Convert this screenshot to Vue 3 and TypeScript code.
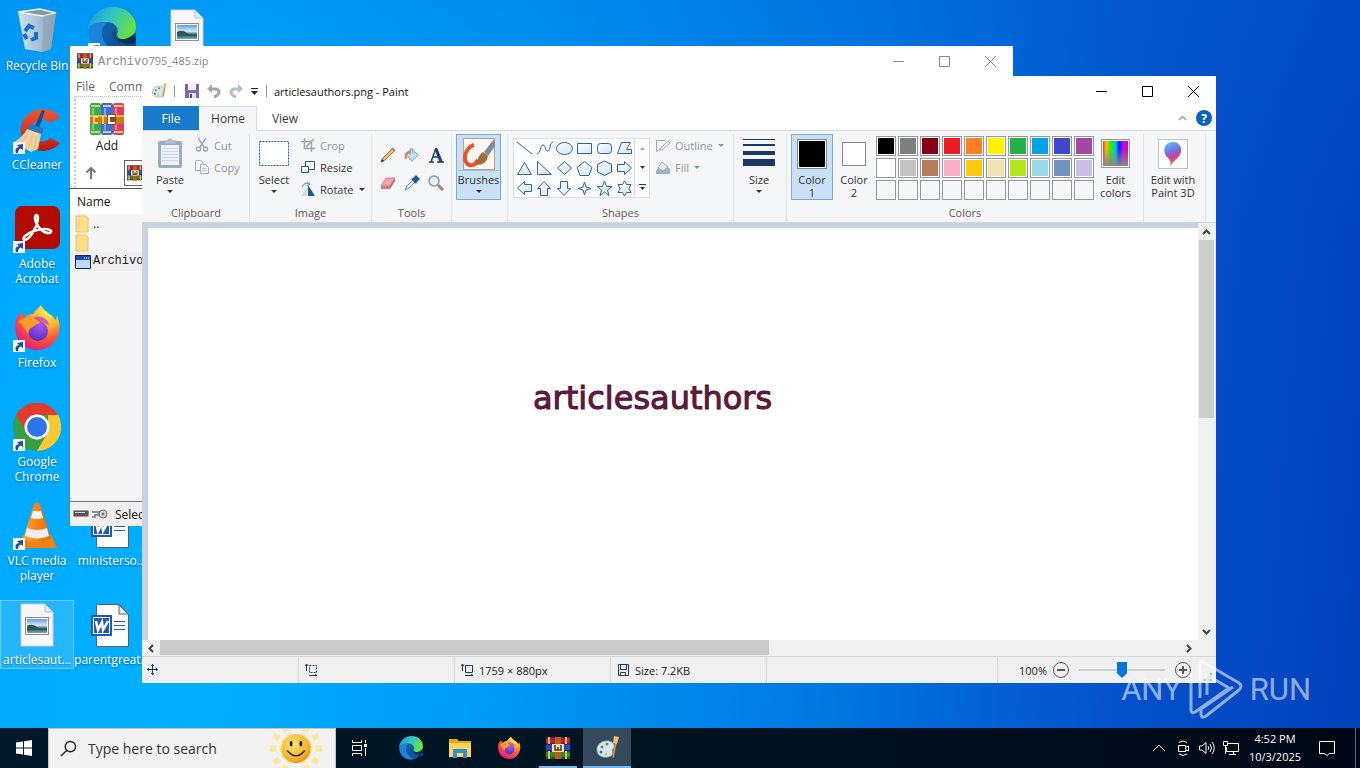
<script setup lang="ts">
import { ref } from 'vue'

interface DesktopItem {
  label: string
  icon: string
  col: number
  row: number
  shortcut?: boolean
  selected?: boolean
}

const desktopItems: DesktopItem[] = [
  { label: 'Recycle Bin', icon: 'bin', col: 1, row: 1 },
  { label: 'CCleaner', icon: 'ccleaner', col: 1, row: 2, shortcut: true },
  { label: 'Adobe Acrobat', icon: 'acrobat', col: 1, row: 3, shortcut: true },
  { label: 'Firefox', icon: 'firefox', col: 1, row: 4, shortcut: true },
  { label: 'Google Chrome', icon: 'chrome', col: 1, row: 5, shortcut: true },
  { label: 'VLC media player', icon: 'vlc', col: 1, row: 6, shortcut: true },
  { label: 'articlesaut...', icon: 'picture', col: 1, row: 7, selected: true },
  { label: '', icon: 'edge', col: 2, row: 1, shortcut: true },
  { label: 'ministerso...', icon: 'word', col: 2, row: 6 },
  { label: 'parentgreat...', icon: 'word', col: 2, row: 7 },
  { label: '', icon: 'picture', col: 3, row: 1 },
]

const shapes: { name: string; d: string }[] = [
  { name: 'Line', d: 'M1 2L16 14' },
  { name: 'Curve', d: 'M1 14C5 13 4 5 7 5S9 12 12 11 13 3 17 2' },
  { name: 'Oval', d: 'M.5 8.500A8 6 0 1 1 16.500 8.500A8 6 0 1 1 .5 8.500Z' },
  { name: 'Rectangle', d: 'M1.500 3.500H15.500V13.500H1.500Z' },
  { name: 'Rounded rectangle', d: 'M4.500 3.500H12.500Q15.500 3.500 15.500 6.500V10.500Q15.500 13.500 12.500 13.500H4.500Q1.500 13.500 1.500 10.500V6.500Q1.500 3.500 4.500 3.500Z' },
  { name: 'Polygon', d: 'M5.500 2.500H14.500L10.500 9.500H15.500V13.500H1.500Z' },
  { name: 'Triangle', d: 'M8.500 2.500L15.500 14.500H1.500Z' },
  { name: 'Right triangle', d: 'M1.500 1.500V14.500H15.500Z' },
  { name: 'Diamond', d: 'M8.500 1.500L15.500 8L8.500 14.500L1.500 8Z' },
  { name: 'Pentagon', d: 'M8.500 1.500L16 7.500L13 15.500H4L1 7.500Z' },
  { name: 'Hexagon', d: 'M8.500 1L15.500 4.500V12L8.500 15.500L1.500 12V4.500Z' },
  { name: 'Right arrow', d: 'M1.500 4.500H8.500V1.500L15.500 8L8.500 14.500V11.500H1.500Z' },
  { name: 'Left arrow', d: 'M15.500 4.500H8.500V1.500L1.500 8L8.500 14.500V11.500H15.500Z' },
  { name: 'Up arrow', d: 'M4.500 15.500V8.500H1.500L8 1.500L14.500 8.500H11.500V15.500Z' },
  { name: 'Down arrow', d: 'M4.500 1.500V8.500H1.500L8 15.500L14.500 8.500H11.500V1.500Z' },
  { name: 'Four-point star', d: 'M8.500 2L10 7L15 8.500L10 10L8.500 15L7 10L2 8.500L7 7Z' },
  { name: 'Five-point star', d: 'M8.500 1L10.500 6.500H16L11.500 10L13 15.500L8.500 12L4 15.500L5.500 10L1 6.500H6.500Z' },
  { name: 'Six-point star', d: 'M8.500 1L10.500 4.500H15L13 8.500L15 12.500H10.500L8.500 16L6.500 12.500H2L4 8.500L2 4.500H6.500Z' },
]

const palette: string[] = [
  '#000000', '#7f7f7f', '#880015', '#ed1c24', '#ff7f27', '#fff200', '#22b14c', '#00a2e8', '#3f48cc', '#a349a4',
  '#ffffff', '#c3c3c3', '#b97a57', '#ffaec9', '#ffc90e', '#efe4b0', '#b5e61d', '#99d9ea', '#7092be', '#c8bfe7',
  '', '', '', '', '', '', '', '', '', '',
]

const tools: { name: string; icon: string }[] = [
  { name: 'Pencil', icon: 'pencil' },
  { name: 'Fill with color', icon: 'bucket' },
  { name: 'Text', icon: 'letter' },
  { name: 'Eraser', icon: 'eraser' },
  { name: 'Color picker', icon: 'picker' },
  { name: 'Magnifier', icon: 'magnifier' },
]

const taskApps: { name: string; icon: string; state: string }[] = [
  { name: 'Microsoft Edge', icon: 'edge', state: '' },
  { name: 'File Explorer', icon: 'explorer', state: '' },
  { name: 'Firefox', icon: 'firefox', state: '' },
  { name: 'WinRAR', icon: 'rar', state: 'open' },
  { name: 'Paint', icon: 'paint', state: 'active' },
]

const zoom = ref(50)
const query = ref('')
const primary = ref('#000000')
</script>

<template>
  <div class="screen">
    <svg class="sprite" aria-hidden="true">
      <defs>
        <linearGradient id="gBin" x1="0" x2="1"><stop offset="0" stop-color="#dfe9ef" /><stop offset=".5" stop-color="#b9c9d4" /><stop offset="1" stop-color="#8da2b2" /></linearGradient>
        <linearGradient id="gCc" x1="0" y1="0" x2="0" y2="1"><stop offset="0" stop-color="#f0563a" /><stop offset="1" stop-color="#b81c12" /></linearGradient>
        <radialGradient id="gFox" cx=".72" cy=".15" r=".95"><stop offset="0" stop-color="#fff44f" /><stop offset=".35" stop-color="#ffb02e" /><stop offset=".6" stop-color="#ff5b32" /><stop offset="1" stop-color="#e31587" /></radialGradient>
        <radialGradient id="gFoxIn" cx=".6" cy=".2" r=".9"><stop offset="0" stop-color="#a855f7" /><stop offset="1" stop-color="#4b2fb3" /></radialGradient>
        <linearGradient id="gEdgeA" x1="0" y1="0" x2="1" y2=".4"><stop offset="0" stop-color="#1d8fd8" /><stop offset=".5" stop-color="#2fc3c8" /><stop offset="1" stop-color="#66e04a" /></linearGradient>
        <linearGradient id="gEdgeB" x1="0" y1="0" x2="1" y2="1"><stop offset="0" stop-color="#0f6fc4" /><stop offset="1" stop-color="#0c4a8c" /></linearGradient>
        <linearGradient id="gVlc" x1="0" x2="1"><stop offset="0" stop-color="#ffa02e" /><stop offset="1" stop-color="#e86a00" /></linearGradient>
        <linearGradient id="gSky" x1="0" y1="0" x2="0" y2="1"><stop offset="0" stop-color="#5b9ee0" /><stop offset=".45" stop-color="#d6e8f5" /><stop offset=".7" stop-color="#27505c" /><stop offset="1" stop-color="#7daec8" /></linearGradient>
        <linearGradient id="gRainbow" x1="0" x2="1"><stop offset="0" stop-color="#f33" /><stop offset=".12" stop-color="#fb0" /><stop offset=".3" stop-color="#3e0" /><stop offset=".5" stop-color="#0cc" /><stop offset=".65" stop-color="#02f" /><stop offset=".82" stop-color="#c0f" /><stop offset="1" stop-color="#f04" /></linearGradient>
        <linearGradient id="gGrey" x1="0" y1="0" x2="0" y2="1"><stop offset=".3" stop-color="#888" stop-opacity="0" /><stop offset="1" stop-color="#888" /></linearGradient>
        <linearGradient id="gPin" x1=".3" y1="0" x2=".6" y2="1"><stop offset="0" stop-color="#45c8f5" /><stop offset=".4" stop-color="#7d6be0" /><stop offset=".65" stop-color="#d8408c" /><stop offset="1" stop-color="#ff9a3c" /></linearGradient>
        <linearGradient id="gShape" x1="0" y1="0" x2="1" y2="1"><stop offset="0" stop-color="#fff" /><stop offset="1" stop-color="#d4e4f5" /></linearGradient>
        <radialGradient id="gSun" cx=".4" cy=".35" r=".7"><stop offset="0" stop-color="#ffe27a" /><stop offset=".7" stop-color="#f8b62c" /><stop offset="1" stop-color="#e08d18" /></radialGradient>
      </defs>

      <symbol id="i-bin" viewBox="0 0 48 48">
        <path d="M5 5L27 2L43 6L38 42L29 45L12 42Z" fill="url(#gBin)" opacity=".92" />
        <path d="M5 5L27 2L43 6L30 9Z" fill="#8497a5" stroke="#eef4f8" stroke-width="1.500" />
        <path d="M30 9L43 6L38 42L29 45Z" fill="#8fa3b3" opacity=".6" />
        <g fill="none" stroke="#1c6fc4" stroke-width="4"><path d="M12 24L16 19L21 21" /><path d="M23 25L23 31L18 33" /><path d="M14 32L11 27" /></g>
      </symbol>
      <symbol id="i-ccleaner" viewBox="0 0 48 48">
        <path d="M47 11A22 21 0 1 0 47 37L37 32A11 11 0 1 1 37 17Z" fill="url(#gCc)" />
        <path d="M29 4L32 5L26 22L22 20Z" fill="#1b4f86" />
        <path d="M17 18L30 22L29 28L14 24Z" fill="#2f77bb" />
        <path d="M14 23L28 28L25 43L18 46L1 36Q9 32 14 23Z" fill="#f0d2a0" />
        <path d="M15 28L7 38M20 29L15 42M24 30L21 43" stroke="#e0bd88" fill="none" />
      </symbol>
      <symbol id="i-acrobat" viewBox="0 0 48 48">
        <rect x="2" y="1" width="45" height="43" rx="7" fill="#b30b00" />
        <path d="M12 35C17 34 24 23 25 13C25 9 22 9 22 13C23 22 31 29 37 28C40 26 37 24 32 24C25 24 17 27 12 31C10 33 10 35 12 35Z" fill="none" stroke="#fff" stroke-width="2.500" />
      </symbol>
      <symbol id="i-firefox" viewBox="0 0 48 48">
        <path d="M3 15L8 8L11 14C13 11 16 10 20 10C22 6 26 4 28 1C30 6 34 8 38 11C41 13 42 16 43 16L44 11C51 27 43 46 24 46C9 46-1 33 3 15Z" fill="url(#gFox)" />
        <circle cx="25" cy="27" r="10" fill="url(#gFoxIn)" />
        <path d="M5 18C10 13 16 13 20 17L27 17C28 20 22 20 20 23C14 25 16 30 16 30C11 26 11 21 5 18Z" fill="#ff9a2b" />
        <path d="M20 14C27 10 36 15 36 22C33 18 28 19 25 17Z" fill="#c836c8" opacity=".75" />
      </symbol>
      <symbol id="i-chrome" viewBox="0 0 48 48">
        <circle cx="24" cy="24" r="24" fill="#34a046" />
        <path d="M3 12A24 24 0 0 1 45 12H24L14 30Z" fill="#e23b2e" />
        <path d="M45 12A24 24 0 0 1 24 48L35 29V12Z" fill="#fcc934" />
        <circle cx="24" cy="24" r="12.500" fill="#fff" /><circle cx="24" cy="24" r="10" fill="#2f75ea" />
      </symbol>
      <symbol id="i-vlc" viewBox="0 0 48 48">
        <path d="M10 33H38L44 46H3Z" fill="#f18210" />
        <path d="M21 2Q24-1 27 2L38 37Q24 44 10 37Z" fill="url(#gVlc)" />
        <path d="M20 9L28 9L30 16Q24 18 18 16Z" fill="#f2f2f2" /><path d="M14 26Q24 30 34 26L36 34Q24 39 12 34Z" fill="#eee" />
      </symbol>
      <symbol id="i-picture" viewBox="0 0 48 48">
        <path d="M8 3H32L40 11V45H8Z" fill="#f7f7f7" stroke="#c9cdd0" /><path d="M32 3V11H40Z" fill="#dfe9f0" stroke="#b5c3cc" />
        <rect x="12.500" y="16.500" width="23" height="17" fill="#fff" stroke="#8d8d8d" /><rect x="14" y="18" width="20" height="14" fill="url(#gSky)" />
        <path d="M14 25Q19 22 24 26T34 28V29H14Z" fill="#2b5a55" />
      </symbol>
      <symbol id="i-word" viewBox="0 0 48 48">
        <path d="M8.500 3.500H31.500L40.500 13.500V45.500H8.500Z" fill="#fff" stroke="#55616b" /><path d="M31 4V13H40Z" fill="#e8e8e8" stroke="#55616b" />
        <path d="M26 20.500H37M26 24.500H37M26 28.500H37" stroke="#2b5fb3" />
        <rect x="3" y="14" width="21" height="21" fill="#1f5bb5" /><rect x="5" y="16" width="17" height="17" fill="#fff" /><rect x="6" y="17" width="15" height="15" fill="#1f5bb5" />
        <path d="M8 20L10 29L14 21L15 29L20 20" fill="none" stroke="#fff" stroke-width="2.500" />
      </symbol>
      <symbol id="i-edge" viewBox="0 0 48 48">
        <circle cx="24" cy="24" r="23" fill="url(#gEdgeB)" />
        <path d="M0 22C2 8 13 0 25 0C39 0 48 10 48 20C48 28 42 32 35 32C30 32 27 30 29 27C32 22 27 15 19 15C10 15 4 18 0 22Z" fill="url(#gEdgeA)" />
        <path d="M1 20C4 16 10 15 19 15C13 20 11 30 20 40C24 44 28 46 30 46C14 50-2 38 1 20Z" fill="#1b84d8" />
        <path d="M29 27C26 32 32 36 40 34L48 29V40L38 39C28 38 22 31 25 23Z" fill="#0c4a8c" />
        <path d="M30 28C28 31 33 33 38 32L48 26V34L44 37Q34 37 30 33Q27 30 30 28Z" fill="#001a29" opacity=".6" />
      </symbol>
      <symbol id="i-explorer" viewBox="0 0 24 24">
        <path d="M1 3H9L11 5H23V21H1Z" fill="#e8a90c" /><path d="M1 7H23V21H1Z" fill="#ffd45a" />
        <path d="M5 13H19V22H15V17H9V22H5Z" fill="#2f8fd8" />
      </symbol>
      <symbol id="i-rar" viewBox="0 0 24 24">
        <rect x="0" y="1" width="24" height="7" fill="#a8244c" /><rect x="0" y="8" width="24" height="7" fill="#2849c0" /><rect x="0" y="15" width="24" height="8" fill="#2c8a3c" />
        <path d="M0 1H24M0 8H24M0 15H24M0 22H24" stroke="#182018" stroke-width="1" />
        <path d="M3 1V8M20 1V8M3 15V23M20 15V23" stroke="#e8b93a" stroke-width="2" />
        <rect x="9" y="1" width="6" height="22" fill="#c35a18" /><rect x="6" y="8" width="12" height="8" fill="#f0dcb8" /><path d="M9 9V14H15V9M12 11V14" fill="none" stroke="#5a3210" stroke-width="1.500" />
      </symbol>
      <symbol id="i-raradd" viewBox="0 0 34 34">
        <rect x="0" y="1" width="11" height="32" rx="2" fill="#35b04c" /><rect x="11" y="1" width="12" height="32" rx="2" fill="#3570e0" /><rect x="23" y="1" width="11" height="32" rx="2" fill="#e03c62" />
        <path d="M1 4H10M13 4H21M24 4H33M1 30H10M13 30H21M24 30H33" stroke="#e8c860" stroke-width="2" />
        <path d="M3 6V28M15 6V28M26 6V28" stroke="#fff" opacity=".35" stroke-width="2" />
        <rect x="0" y="13" width="34" height="9" fill="#c87a18" /><path d="M0 14H34" stroke="#f7b93c" stroke-width="2" />
        <path d="M8 15H4V21H8M13 14V22" fill="none" stroke="#ffe48a" stroke-width="1.500" /><rect x="17" y="12" width="9" height="11" fill="#8a4d10" /><path d="M25 14H19V21H25" fill="none" stroke="#fff" stroke-width="2" />
      </symbol>
      <symbol id="i-paint" viewBox="0 0 24 24">
        <path d="M2 15C1 8 8 4 14 5C20 6 20 11 18 13C16 15 19 17 17 19C13 23 3 22 2 15Z" fill="#d5e7f2" stroke="#7ca2b8" stroke-width=".8" />
        <circle cx="7" cy="11" r="1.500" fill="#e8522e" /><circle cx="12" cy="8" r="1.500" fill="#3aa845" /><circle cx="6" cy="16" r="1.500" fill="#2e6fd8" /><circle cx="11" cy="18" r="1.500" fill="#f2bf24" />
        <path d="M20 5L22 5L19 21L17 22Z" fill="#de8d35" /><path d="M19 0L24 1L22 8L18 7Z" fill="#f3c06b" />
      </symbol>
      <symbol id="i-pencil" viewBox="0 0 16 16"><path d="M1 15L3 11L12 2L14 4L5 13Z" fill="#f0c06a" stroke="#8a6c40" /><path d="M12 1L15 4" stroke="#c08080" stroke-width="2" /><path d="M1 15L2 12L4 14Z" fill="#222" /></symbol>
      <symbol id="i-bucket" viewBox="0 0 18 18"><path d="M8 2L16 9L9 16L3 9Z" fill="#bfe0f6" stroke="#6a9cc4" /><path d="M1 14C0 6 3 4 8 5L6 8C3 8 3 10 4 12Z" fill="#e0805c" /><path d="M7 9V3Q8 0 10 2V7" fill="none" stroke="#8b9fb0" /></symbol>
      <symbol id="i-letter" viewBox="0 0 16 16"><path d="M8 1L14 15M8 1L3 15M5 10H11" stroke="#1e3e6e" stroke-width="1.500" fill="none" /><path d="M8 2L13 15" stroke="#1e3e6e" stroke-width="3" /><path d="M1 15H6M9 15H16" stroke="#1e3e6e" stroke-width="1.500" /></symbol>
      <symbol id="i-eraser" viewBox="0 0 16 16"><path d="M6 3H15L10 11H1Z" fill="#f0a3a8" stroke="#d68088" /><path d="M1 11H10V14H1Z" fill="#d97a80" /><path d="M10 11L15 3V6L10 14Z" fill="#c0636b" /></symbol>
      <symbol id="i-picker" viewBox="0 0 16 16"><path d="M1 15L3 11L9 5L11 7L5 13Z" fill="#d8ecf8" stroke="#6a8aa0" /><path d="M7 4L9 3L12 0L16 4L13 7L12 9Z" fill="#22598f" /></symbol>
      <symbol id="i-magnifier" viewBox="0 0 16 16"><path d="M10 10L15 15" stroke="#a08870" stroke-width="3" /><circle cx="6" cy="6" r="5" fill="#e2f0f8" stroke="#8b99a5" stroke-width="1.500" /></symbol>
      <symbol id="i-shortcut" viewBox="0 0 12 12"><rect width="12" height="12" fill="#f4f8fb" /><path d="M3 11Q1 6 6 5L4 3L10 2V8L8 6.500Q5 7 5 11Z" fill="#1d4f95" /></symbol>
    </svg>

    <main class="desktop">
      <ul class="icons">
        <li v-for="(item, i) in desktopItems" :key="i" :class="['cell', `c${item.col}`, `r${item.row}`]">
          <button class="shortcut" :class="{ selected: item.selected }" :aria-label="item.label || item.icon">
            <span class="pic">
              <svg class="big"><use :href="`#i-${item.icon}`" /></svg>
              <svg v-if="item.shortcut" class="arrow"><use href="#i-shortcut" /></svg>
            </span>
            <span class="name">{{ item.label }}</span>
          </button>
        </li>
      </ul>

      <section class="window winrar" aria-label="WinRAR">
        <header class="titlebar">
          <svg class="ico16"><use href="#i-rar" /></svg>
          <span class="caption"><span class="mono">Archivo</span>795_485.zip</span>
          <div class="controls">
            <button aria-label="Minimize"><svg viewBox="0 0 11 11"><path d="M0 5.500H11" /></svg></button>
            <button aria-label="Maximize"><svg viewBox="0 0 11 11"><path d="M.5 .5H10.500V10.500H.5Z" /></svg></button>
            <button aria-label="Close"><svg viewBox="0 0 11 11"><path d="M0 0L11 11M11 0L0 11" /></svg></button>
          </div>
        </header>
        <nav class="menu"><button>File</button><button>Commands</button></nav>
        <div class="rar-tools">
          <button class="add"><svg><use href="#i-raradd" /></svg>Add</button>
        </div>
        <div class="rar-path">
          <button aria-label="Up one level" class="up"><svg viewBox="0 0 12 12"><path d="M6 12V1M1.500 5.500L6 1L10.500 5.500" fill="none" stroke="#777" stroke-width="2" /></svg></button>
          <div class="address"><svg><use href="#i-rar" /></svg></div>
        </div>
        <div class="rar-list">
          <table>
            <thead><tr><th>Name</th></tr></thead>
            <tbody>
              <tr><td><span class="file"><svg viewBox="0 0 16 18"><path d="M1 1H11L13 3V17H1Z" fill="#ffe08a" stroke="#e8c25a" /></svg>..</span></td></tr>
              <tr><td><span class="file"><svg viewBox="0 0 16 18"><path d="M1 1H11L13 3V17H1Z" fill="#ffe08a" stroke="#e8c25a" /></svg></span></td></tr>
              <tr class="exe"><td><span class="file mono"><svg viewBox="0 0 16 14"><path d="M.5 .5H15.500V13.500H.5Z" fill="#bfd8f5" stroke="#16264c" /><path d="M1 1H15V5H1Z" fill="#1d4fb0" /><path d="M9 3H14" stroke="#fff" stroke-dasharray="1 1" /></svg>Archivo795_485</span></td></tr>
            </tbody>
          </table>
        </div>
        <footer class="rar-status">
          <svg viewBox="0 0 16 10"><rect x=".5" y="1.500" width="15" height="6" rx="1" fill="#555" stroke="#999" /><path d="M2 3.500H12" stroke="#ccc" /></svg>
          <svg viewBox="0 0 16 10"><path d="M0 3H7V6H3V8H0" fill="none" stroke="#777" stroke-width="1.500" /><circle cx="11" cy="5" r="4" fill="#ddd" stroke="#666" /><circle cx="11" cy="5" r="1.500" fill="#777" /></svg>
          <span>Selected</span>
        </footer>
      </section>

      <section class="window paint" aria-label="Paint">
        <header class="titlebar">
          <svg class="ico16"><use href="#i-paint" /></svg>
          <i class="bar"></i>
          <div class="quick">
            <button aria-label="Save"><svg viewBox="0 0 14 14"><path d="M0 0H14V14H0Z" fill="#8068ac" /><path d="M3 0H11V6H3Z" fill="#f3effa" /><path d="M4 9H11V14H4Z" fill="#e6def2" /><path d="M5 10H7V14H5Z" fill="#56408a" /></svg></button>
            <button aria-label="Undo"><svg viewBox="0 0 14 14"><path d="M2 5H8Q12 5 12 8T7 13" fill="none" stroke="#9ba9bb" stroke-width="3" /><path d="M0 5L5 0V9Z" fill="#9ba9bb" /></svg></button>
            <button aria-label="Redo"><svg viewBox="0 0 14 14"><path d="M12 5H6Q2 5 2 8T7 13" fill="none" stroke="#b4bfcc" stroke-width="3" /><path d="M14 5L9 0V9Z" fill="#b4bfcc" /></svg></button>
            <button aria-label="Customize Quick Access Toolbar" class="custom"><svg viewBox="0 0 7 7"><path d="M0 .5H7" stroke="#222" /><path d="M0 3H7L3.500 7Z" fill="#222" /></svg></button>
          </div>
          <i class="bar"></i>
          <span class="caption">articlesauthors.png - Paint</span>
          <div class="controls">
            <button aria-label="Minimize"><svg viewBox="0 0 11 11"><path d="M0 5.500H11" /></svg></button>
            <button aria-label="Maximize"><svg viewBox="0 0 11 11"><path d="M.5 .5H10.500V10.500H.5Z" /></svg></button>
            <button aria-label="Close"><svg viewBox="0 0 11 11"><path d="M0 0L11 11M11 0L0 11" /></svg></button>
          </div>
        </header>

        <nav class="tabs">
          <button class="file-tab">File</button>
          <button class="home-tab">Home</button>
          <button class="view-tab">View</button>
          <button class="collapse" aria-label="Collapse the ribbon"><svg viewBox="0 0 9 6"><path d="M1 5L4.500 1.500L8 5" fill="none" stroke="#9aa2aa" stroke-width="1.500" /></svg></button>
          <button class="help" aria-label="Help">?</button>
        </nav>

        <div class="ribbon">
          <section class="group clipboard">
            <div class="body">
              <button class="tall">
                <svg class="ico32" viewBox="0 0 32 32"><rect x="4" y="3" width="24" height="27" rx="2" fill="#9aabc2" /><rect x="7" y="7" width="18" height="20" fill="#edf2f8" /><path d="M8 10.500H24M8 13.500H24M8 16.500H24M8 19.500H24M8 22.500H24" stroke="#c9d6e6" /><path d="M10 6V3H13Q16-1 19 3H22V6Z" fill="#b5c1d0" stroke="#9aabc2" /></svg>
                Paste<i class="caret"></i>
              </button>
              <div class="rows">
                <button class="off"><svg viewBox="0 0 14 14"><path d="M3 0L9 9M11 0L5 9" stroke="#9aa7b8" stroke-width="1.500" /><circle cx="3.500" cy="11" r="2" fill="none" stroke="#9aa7b8" stroke-width="1.500" /><circle cx="10.500" cy="11" r="2" fill="none" stroke="#9aa7b8" stroke-width="1.500" /></svg>Cut</button>
                <button class="off"><svg viewBox="0 0 14 14"><path d="M.5 .5H5.500L8.500 3.500V10.500H.5Z" fill="#f5f8fc" stroke="#9db0c8" /><path d="M5.500 4.500H10.500L13.500 7.500V13.500H5.500Z" fill="#f5f8fc" stroke="#9db0c8" /><path d="M7 8.500H12M7 10.500H12" stroke="#b4c4d8" /></svg>Copy</button>
              </div>
            </div>
            <h2>Clipboard</h2>
          </section>

          <section class="group image">
            <div class="body">
              <button class="tall">
                <svg class="ico32" viewBox="0 0 32 32"><rect x="1.500" y="3.500" width="29" height="24" fill="#fbfdff" stroke="#2a5d9e" stroke-dasharray="2 1" /></svg>
                Select<i class="caret"></i>
              </button>
              <div class="rows">
                <button class="off"><svg viewBox="0 0 14 14"><path d="M3.500 0V10.500H14M0 3.500H10.500V14M13 1L5 9" fill="none" stroke="#9aa7b8" stroke-width="1.500" /></svg>Crop</button>
                <button><svg viewBox="0 0 14 14"><path d="M4.500 1.500H13.500V9.500H4.500Z" fill="#fff" stroke="#24598f" /><path d="M.5 6.500H7.500V12.500H.5Z" fill="#fff" stroke="#24598f" /></svg>Resize</button>
                <button><svg viewBox="0 0 14 14"><path d="M0 14L6 5V14Z" fill="#c9dcf0" /><path d="M7 14V3L14 14Z" fill="#24598f" /><path d="M1 5Q3 0 8 2M6 0L9 2L6 4" fill="none" stroke="#4f86c0" /></svg>Rotate<i class="caret"></i></button>
              </div>
            </div>
            <h2>Image</h2>
          </section>

          <section class="group tools">
            <div class="body tool-grid">
              <button v-for="t in tools" :key="t.name" :aria-label="t.name"><svg><use :href="`#i-${t.icon}`" /></svg></button>
            </div>
            <h2>Tools</h2>
          </section>

          <section class="group brushes">
            <div class="body">
              <button class="tall lit">
                <svg class="ico32" viewBox="0 0 32 32"><rect x=".5" y=".5" width="31" height="31" fill="#fbf8f4" stroke="#b9a08a" /><path d="M11 7C4 9 0 18 3 24C6 29 12 28 15 22" fill="none" stroke="#e8552c" stroke-width="4" /><path d="M31 1L21 14L25 18L32 8Z" fill="#7c8c9a" /><path d="M20 14L25 18Q24 27 13 27Q15 17 20 14Z" fill="#a4683a" /></svg>
                <span class="split">Brushes</span><i class="caret"></i>
              </button>
            </div>
          </section>

          <section class="group shapes">
            <div class="body">
              <div class="gallery">
                <div class="shape-grid">
                  <button v-for="s in shapes" :key="s.name" :aria-label="s.name">
                    <svg viewBox="0 0 17 17"><path :d="s.d" :fill="s.name === 'Line' || s.name === 'Curve' ? 'none' : 'url(#gShape)'" stroke="#2f649c" /></svg>
                  </button>
                </div>
                <div class="gallery-scroll">
                  <button aria-label="Scroll up"><svg viewBox="0 0 5 3"><path d="M0 3H5L2.500 0Z" fill="#aaa" /></svg></button>
                  <button aria-label="Scroll down"><svg viewBox="0 0 5 3"><path d="M0 0H5L2.500 3Z" fill="#333" /></svg></button>
                  <button aria-label="More shapes" class="more"><svg viewBox="0 0 7 6"><path d="M0 .5H7" stroke="#333" /><path d="M1 3H6L3.500 6Z" fill="#333" /></svg></button>
                </div>
              </div>
              <div class="rows">
                <button class="off"><svg viewBox="0 0 14 14"><path d="M.5 2.500H9M.5 2.500V13.500L4 11M4 11L12 3L14 5L6 12Z" fill="none" stroke="#9aa7b8" /></svg>Outline<i class="caret"></i></button>
                <button class="off"><svg viewBox="0 0 14 14"><path d="M0 14V11L6 2L14 9V14Z" fill="#9db0cc" /><path d="M6 2L12 7L7 11L2 8Z" fill="#e6edf5" stroke="#9aa7b8" /></svg>Fill<i class="caret"></i></button>
              </div>
            </div>
            <h2>Shapes</h2>
          </section>

          <section class="group size">
            <div class="body">
              <button class="tall">
                <svg class="ico32" viewBox="0 0 32 32"><path d="M0 1H32V2H0ZM0 6H32V8H0ZM0 13H32V17H0ZM0 21H32V28H0Z" fill="#1c3761" /></svg>
                Size<i class="caret"></i>
              </button>
            </div>
          </section>

          <section class="group colors">
            <div class="body">
              <button class="tall chip lit"><span class="well"><span class="swatch" :style="{ background: primary }"></span></span>Color<br />1</button>
              <button class="tall chip"><span class="well"><span class="swatch small"></span></span>Color<br />2</button>
              <div class="palette">
                <button v-for="(c, i) in palette" :key="i" :class="{ blank: !c }" :aria-label="c || 'Empty color'" :style="{ backgroundColor: c }" @click="c && (primary = c)"></button>
              </div>
              <button class="tall edit">
                <svg class="ico32" viewBox="0 0 32 32"><rect x="1.500" y="1.500" width="28" height="28" fill="#fff" stroke="#999" /><rect x="3" y="3" width="25" height="25" fill="url(#gRainbow)" /><rect x="3" y="3" width="25" height="25" fill="url(#gGrey)" /></svg>
                Edit<br />colors
              </button>
            </div>
            <h2>Colors</h2>
          </section>

          <section class="group three-d">
            <div class="body">
              <button class="tall edit">
                <svg class="ico32" viewBox="0 0 32 32"><rect x="1.500" y="1.500" width="29" height="29" fill="#fdfdfd" stroke="#c4c4c4" /><path d="M16 4C22 4 25 9 24 14C23 19 18 22 13 28C14 24 13 22 11 20C4 13 8 4 16 4Z" fill="url(#gPin)" /></svg>
                Edit with<br />Paint 3D
              </button>
            </div>
          </section>
        </div>

        <div class="work">
          <div class="canvas"><p>articlesauthors</p></div>
          <div class="vscroll">
            <button aria-label="Scroll up"><svg viewBox="0 0 9 6"><path d="M1 5L4.500 1.500L8 5" /></svg></button>
            <div class="vthumb"></div>
            <button aria-label="Scroll down"><svg viewBox="0 0 9 6"><path d="M1 1L4.500 4.500L8 1" /></svg></button>
          </div>
          <div class="hscroll">
            <button aria-label="Scroll left"><svg viewBox="0 0 6 9"><path d="M5 1L1.500 4.500L5 8" /></svg></button>
            <div class="hthumb"></div>
            <button aria-label="Scroll right"><svg viewBox="0 0 6 9"><path d="M1 1L4.500 4.500L1 8" /></svg></button>
          </div>
          <div class="corner"></div>
        </div>

        <footer class="status">
          <div class="stat"><svg viewBox="0 0 12 12"><path d="M5.500 0V11M0 5.500H11M4 1.500H7M4 9.500H7M1.500 4V7M9.500 4V7" fill="none" stroke="#1f3a66" /></svg></div>
          <div class="stat"><svg viewBox="0 0 12 12"><path d="M1.500 0V7M0 2L1.500 0L3 2M4 11.500H12M10 10L12 11.500" fill="none" stroke="#1f3a66" /><path d="M4.500 1.500H11.500V8.500H4.500Z" fill="none" stroke="#1f3a66" stroke-dasharray="2 1" /></svg></div>
          <div class="stat"><svg viewBox="0 0 12 12"><path d="M1.500 0V7M0 2L1.500 0L3 2M4 11.500H12M10 10L12 11.500M4.500 1.500H11.500V8.500H4.500Z" fill="none" stroke="#1f3a66" /></svg>1759 × 880px</div>
          <div class="stat"><svg viewBox="0 0 12 12"><path d="M1.500 .5H11.500V11.500H1.500ZM3.500 .5V5.500H9.500V.5M3.500 11.500V8.500H8.500V11.500" fill="none" stroke="#1f3a66" /></svg>Size: 7.2KB</div>
          <div class="zoomer">
            <label for="zoom">100%</label>
            <button aria-label="Zoom out"><svg viewBox="0 0 16 16"><circle cx="8" cy="8" r="7.500" /><path d="M4 8H12" stroke-width="2" /></svg></button>
            <input id="zoom" v-model="zoom" type="range" min="0" max="100" />
            <button aria-label="Zoom in"><svg viewBox="0 0 16 16"><circle cx="8" cy="8" r="7.500" /><path d="M4 8H12M8 4V12" stroke-width="2" /></svg></button>
            <svg class="grip" viewBox="0 0 10 10"><path d="M7 1H9M4 4H6M7 4H9M1 7H3M4 7H6M7 7H9" /></svg>
          </div>
        </footer>
      </section>
    </main>

    <div class="watermark">
      <span>ANY</span>
      <svg viewBox="0 0 58 60"><path d="M4 13V50Q4 54 8 52L42 28L20 15V35M13 38V5Q13 0 18 3L52 23Q56 26 52 30L19 56Q14 59 14 54V49L46 27" fill="none" stroke="#fff" stroke-width="3" stroke-linejoin="round" /></svg>
      <span>RUN</span>
    </div>

    <footer class="taskbar">
      <button class="start" aria-label="Start"><svg viewBox="0 0 16 16"><path d="M0 2.500L7 1.500V7.500H0ZM8 1.300L16 0V7.500H8ZM0 8.500H7V14.500L0 13.500ZM8 8.500H16V16L8 14.700Z" fill="#fff" /></svg></button>
      <div class="search">
        <svg class="lens" viewBox="0 0 18 18"><circle cx="11" cy="7" r="5.500" fill="none" stroke="#222" stroke-width="1.500" /><path d="M7 11L1 17" stroke="#222" stroke-width="1.500" /></svg>
        <input v-model="query" type="text" placeholder="Type here to search" aria-label="Type here to search" />
        <svg class="sun" viewBox="0 0 58 40"><g stroke="#fbe9a0" stroke-width="6" stroke-dasharray="7 3"><path d="M29 20L0 20M29 20L58 20M29 20L4 5M29 20L54 5M29 20L4 36M29 20L54 36M29 20L15-6M29 20L43-6M29 20L15 46M29 20L43 46" /></g><circle cx="29" cy="20" r="15" fill="url(#gSun)" /><ellipse cx="24" cy="15" rx="1.500" ry="3" fill="#222" /><ellipse cx="34" cy="15" rx="1.500" ry="3" fill="#222" /><path d="M20 22Q29 33 38 22" fill="none" stroke="#222" stroke-width="1.500" /></svg>
      </div>
      <button class="task task-view" aria-label="Task View"><svg class="view" viewBox="0 0 18 16"><path d="M1.500 0V2.500H10.500V0M1.500 5.500H10.500V10.500H1.500ZM1.500 16V13.500H10.500V16M14.500 0V3M14.500 8V16" fill="none" stroke="#fff" /><rect x="13" y="4" width="3" height="3" fill="#fff" /></svg></button>
      <button v-for="app in taskApps" :key="app.name" class="task" :class="app.state" :aria-label="app.name"><svg viewBox="0 0 24 24"><use :href="`#i-${app.icon}`" /></svg></button>
      <div class="tray">
        <button aria-label="Show hidden icons"><svg viewBox="0 0 16 16"><path d="M2 11L8 5L14 11" /></svg></button>
        <button aria-label="Meet Now"><svg viewBox="0 0 16 16"><path d="M3.500 5.500H10.500V11.500H3.500ZM10.500 7.500L13.500 6V11L10.500 9.500M4 2.500Q8-.5 12 2.500M4 14Q8 17 12 14" /></svg></button>
        <button aria-label="Volume"><svg viewBox="0 0 16 16"><path d="M.5 6H3L7 2.500V13.500L3 10H.5ZM9 6Q10.500 8 9 10M11 4Q14 8 11 12M13 2Q17.500 8 13 14" /></svg></button>
        <button aria-label="Network"><svg viewBox="0 0 16 16"><path d="M5 3.500H15.500V11.500H3.500V7M10.500 11.500V14.500M6 14.500H13M.5 1.500H4.500V5.500H.5ZM2.500 5.500V14" /></svg></button>
        <div class="clock"><span>4:52 PM</span><span>10/3/2025</span></div>
        <button class="notes" aria-label="Notifications"><svg viewBox="0 0 16 16"><path d="M.5 1.500H15.500V13.500H10.500L8 15.500L5.500 13.500H.5Z" /></svg></button>
      </div>
    </footer>
  </div>
</template>

<style>
html, body { margin: 0; overflow: hidden; }
</style>

<style scoped>
.screen {
  position: relative;
  display: grid;
  grid-template-rows: 1fr 40px;
  height: 100vh;
  overflow: hidden;
  font: 11px/15px "Open Sans", "Noto Sans", sans-serif;
  color: #1e1e1e;
  background:
    linear-gradient(180deg, rgba(0, 90, 210, .24), rgba(0, 90, 210, 0) 28%),
    linear-gradient(95deg, #00a8fd 0%, #00b0ff 16%, #009cf6 38%, #0078e2 62%, #0452cc 82%, #0340bc 100%);
}
.sprite { position: absolute; width: 0; height: 0; }
button { font: inherit; color: inherit; background: none; border: 0; padding: 0; margin: 0; display: flex; align-items: center; }
svg { display: block; flex: none; }
i { display: block; flex: none; }
.mono { font-family: "Liberation Mono", monospace; font-size: 12px; }

.desktop { position: relative; min-height: 0; }
.icons {
  display: grid;
  grid-template-columns: repeat(3, 75px);
  grid-auto-rows: 99px;
  margin: 0;
  padding: 6px 0 0;
  list-style: none;
}
.c1 { grid-column: 1; } .c2 { grid-column: 2; } .c3 { grid-column: 3; }
.r1 { grid-row: 1; } .r2 { grid-row: 2; } .r3 { grid-row: 3; } .r4 { grid-row: 4; } .r5 { grid-row: 5; } .r6 { grid-row: 6; } .r7 { grid-row: 7; }
.shortcut { flex-direction: column; width: 74px; padding: 0; color: #fff; font-size: 12px; text-align: center; border: 1px solid transparent; text-shadow: 0 1px 2px rgba(0, 20, 60, .5); }
.shortcut.selected { background: rgba(255, 255, 255, .14); border-color: rgba(170, 225, 255, .5); }
.pic { position: relative; }
.big { width: 48px; height: 48px; }
.arrow { position: absolute; left: 0; bottom: 0; width: 12px; height: 12px; }
.name { margin: 3px 0 1px; min-height: 15px; }

.window { position: absolute; display: flex; flex-direction: column; background: #fff; overflow: hidden; }
.winrar { left: 69px; top: 46px; right: 347px; bottom: 202px; border-left: 1px solid #5b7c94; }
.paint { left: 142px; top: 76px; right: 144px; bottom: 45px; }
.titlebar { display: flex; align-items: center; height: 30px; flex: none; }
.ico16 { width: 16px; height: 16px; }
.caption { flex: 1; white-space: nowrap; }
.controls { display: flex; }
.controls button { width: 46px; height: 30px; justify-content: center; }
.controls svg { width: 11px; height: 11px; fill: none; stroke: #000; }
.winrar .titlebar { padding-left: 7px; gap: 5px; color: #8a8a8a; }
.winrar .controls svg { stroke: #888; }
.menu { display: flex; gap: 14px; padding-left: 6px; height: 20px; color: #666; font-size: 12px; }
.rar-tools { display: flex; height: 60px; margin-left: 4px; border-top: 1px dotted #bbb; border-left: 2px dotted #ccc; padding-left: 14px; }
.add { flex-direction: column; align-self: flex-start; font-size: 12px; color: #111; padding-top: 5px; gap: 2px; }
.add svg { width: 34px; height: 34px; }
.rar-path { display: flex; align-items: center; height: 31px; margin-left: 4px; border-left: 2px dotted #ccc; }
.up { width: 30px; height: 28px; justify-content: center; }
.up svg { width: 12px; height: 12px; }
.address { flex: 1; margin-left: 18px; height: 24px; border: 1px solid #666; display: flex; align-items: center; padding-left: 2px; }
.address svg { width: 16px; height: 16px; }
.rar-list { flex: 1; min-height: 0; border-top: 1px solid #555; background: #f5f5f5; overflow: hidden; }
table { border-collapse: collapse; width: 100%; }
th { height: 25px; text-align: left; font-weight: 400; font-size: 12px; background: #fff; padding: 0 7px; color: #111; }
td { height: 19px; padding: 0 5px; font-size: 12px; }
.exe td { background: #efefef; }
.file { display: flex; align-items: center; gap: 2px; }
.file svg { width: 16px; height: 18px; }
.exe svg { height: 14px; }
.rar-status { display: flex; align-items: center; gap: 3px; height: 24px; border-top: 1px solid #777; background: #f0f0f0; padding-left: 3px; font-size: 12px; color: #111; }
.rar-status svg { width: 16px; height: 10px; }
.rar-status span { padding-left: 4px; }

.paint > .titlebar { padding-left: 9px; color: #111; }
.bar { width: 1px; height: 12px; margin: 0 7px; background: #999; }
.quick { display: flex; gap: 8px; margin: 0 1px 0 3px; }
.quick svg { width: 14px; height: 14px; }
.quick .custom svg { width: 7px; height: 7px; }
.tabs { display: flex; height: 24px; flex: none; padding-left: 1px; border-bottom: 1px solid #d8dce0; font-size: 12px; color: #3b3b3b; }
.tabs button { justify-content: center; }
.tabs .file-tab { width: 56px; background: #1979ca; color: #fff; }
.home-tab { width: 58px; background: #f5f6f7; box-shadow: inset -1px 1px #d8dce0; margin-bottom: -1px; }
.view-tab { width: 56px; }
.tabs .collapse { margin-left: auto; width: 24px; }
.collapse svg { width: 9px; height: 6px; }
.help { width: 16px; height: 16px; margin: 4px 4px 0 2px; border-radius: 50%; background: #0a64bd; color: #fff; font-weight: 700; }

.ribbon { display: flex; height: 91px; flex: none; padding-left: 1px; background: #f5f6f7; border-bottom: 1px solid #d2d6db; color: #333; font-size: 11px; }
.group { display: flex; flex-direction: column; box-sizing: border-box; border-right: 1px solid #e0e2e5; margin-top: 3px; }
.body { display: flex; height: 70px; flex: none; }
h2 { margin: 0; font: inherit; line-height: 18px; color: #5a5a5a; text-align: center; }
.tall { flex-direction: column; line-height: 13px; box-sizing: border-box; padding-top: 3px; border: 1px solid transparent; height: 66px; }
.ico32 { width: 32px; height: 32px; margin-bottom: 3px; }
.caret { width: 0; height: 0; border: 3px solid transparent; border-top-color: currentColor; border-bottom: 0; margin-top: 4px; }
.rows { display: flex; flex-direction: column; }
.rows button { height: 22px; gap: 5px; font-size: 11px; }
.rows svg { width: 14px; height: 14px; }
.rows .caret { margin-top: 0; }
.off { color: #8f959c; }
.lit { background: #c9e0f7; border-color: #7da9dc; }
.clipboard { width: 107px; } .clipboard .tall { width: 44px; margin: 0 3px 0 5px; }
.image { width: 122px; } .image .tall { width: 44px; margin: 0 5px 0 2px; }
.tools { width: 80px; }
.tool-grid { display: grid; grid-template-columns: repeat(3, 24px); grid-auto-rows: 28px; justify-content: center; align-content: center; }
.tool-grid button { justify-content: center; }
.tool-grid svg { width: 16px; height: 16px; }
.brushes { width: 56px; } .brushes .tall { width: 45px; margin-left: 4px; }
.split { border-top: 1px solid #9dc0e6; margin-top: -3px; padding-top: 2px; }
.shapes { width: 226px; } .shapes .body { gap: 6px; padding-left: 5px; }
.gallery { display: flex; height: 58px; margin-top: 4px; border: 1px solid #dadfe4; background: #fafcfe; }
.shape-grid { display: grid; grid-template-columns: repeat(6, 20px); grid-auto-rows: 20px; margin-top: -1px; }
.shape-grid button { justify-content: center; }
.shape-grid svg { width: 17px; height: 17px; }
.gallery-scroll { display: grid; grid-template-rows: repeat(3, 1fr); width: 14px; border-left: 1px solid #dadfe4; }
.gallery-scroll button { justify-content: center; }
.gallery-scroll svg { width: 5px; height: 3px; }
.gallery-scroll .more svg { width: 7px; height: 6px; }
.size { width: 53px; } .size .tall { width: 44px; margin-left: 3px; }
.colors { width: 357px; }
.colors .body { padding-left: 4px; }
.chip { width: 42px; text-align: center; display: block; }
.well { display: flex; height: 32px; margin-bottom: 3px; align-items: center; justify-content: center; }
.swatch { width: 28px; height: 28px; border: 1px solid #888; outline: 1px solid #fff; outline-offset: -2px; background: #fff; }
.swatch.small { width: 22px; height: 22px; }
.palette { display: grid; grid-template-columns: repeat(10, 20px); grid-auto-rows: 20px; gap: 2px; margin: 2px 4px 0 1px; }
.palette button { border: 1px solid #999; box-shadow: inset 0 0 0 1px #fff; }
.palette .blank { box-shadow: none; }
.edit { width: 35px; text-align: center; display: block; white-space: nowrap; }
.edit svg { margin: 0 auto 3px; }
.three-d { width: 62px; } .three-d .edit { width: 58px; }

.work { flex: 1; min-height: 0; display: grid; grid-template-columns: 1fr 18px; grid-template-rows: 1fr 16px; }
.canvas { border-top: 5px solid #c8d3e1; border-left: 6px solid #c8d3e1; overflow: hidden; }
.canvas p { margin: 150px 0 0 385px; font: 32px/40px "DejaVu Sans", sans-serif; color: #651a3f; -webkit-text-stroke: 1px #4f1434; }
.vscroll, .hscroll { display: flex; background: #f0f0f0; }
.vscroll { flex-direction: column; }
.vscroll button { height: 17px; justify-content: center; width: 16px; }
.vscroll svg { width: 9px; height: 6px; }
.hscroll button { width: 18px; justify-content: center; }
.hscroll svg { width: 6px; height: 9px; }
.vscroll path, .hscroll path { fill: none; stroke: #444; stroke-width: 2; }
.vthumb { height: 178px; width: 15px; margin: 0 1px; background: #cdcdcd; }
.vscroll button:last-child { margin-top: auto; }
.hthumb { width: 609px; background: #cbcbcb; margin-bottom: 1px; }
.hscroll button:last-child { margin-left: auto; }
.corner { background: #f0f0f0; }
.status { display: flex; height: 27px; flex: none; box-sizing: border-box; border-top: 1px solid #d7d7d7; background: #f0f0f0; }
.stat { display: flex; align-items: center; gap: 6px; width: 156px; box-sizing: border-box; padding-left: 6px; border-right: 1px solid #d7d7d7; }
.stat:first-child { width: 157px; padding-left: 5px; }
.stat svg { width: 12px; height: 12px; }
.zoomer { display: flex; align-items: center; margin-left: auto; padding: 0 3px 0 21px; border-left: 1px solid #d7d7d7; }
.zoomer button { margin: 0 6px; }
.zoomer button:last-of-type { margin-right: 12px; }
.zoomer svg { width: 16px; height: 16px; fill: none; stroke: #555; }
.zoomer .grip { width: 10px; height: 10px; align-self: flex-end; stroke: #b5b5b5; stroke-width: 2; }
.zoomer input { appearance: none; width: 86px; height: 18px; margin: 0 4px; background: linear-gradient(#cfcfcf, #cfcfcf) center / 100% 2px no-repeat; }
.zoomer input::-webkit-slider-thumb { appearance: none; width: 10px; height: 16px; background: #0078d7; clip-path: polygon(0 0, 100% 0, 100% 70%, 50% 100%, 0 70%); }

.watermark { position: absolute; right: 49px; bottom: 48px; display: flex; align-items: center; opacity: .55; pointer-events: none; color: #fff; font: 400 31px/60px Roboto, "Liberation Sans", sans-serif; }
.watermark svg { width: 58px; height: 60px; margin: 0 5px; }

.taskbar { position: relative; display: flex; color: #fff; background: linear-gradient(90deg, #001a29, #00111f 60%, #000817); }
.start { width: 48px; justify-content: center; }
.start svg { width: 16px; height: 16px; }
.search { display: flex; align-items: center; width: 288px; box-sizing: border-box; padding-left: 11px; background: #f2f2f2; border: 1px solid #c8c8c8; border-bottom: 0; }
.lens { width: 17px; height: 17px; }
.search input { flex: 1; min-width: 0; margin-left: 10px; border: 0; padding: 0 0 0 1px; background: none; font: 14px/20px "Open Sans", "Noto Sans", sans-serif; outline: 0; }
.search input::placeholder { color: #333; opacity: 1; }
.sun { width: 58px; height: 39px; margin-right: 10px; }
.task { width: 48px; justify-content: center; margin-right: 1px; box-sizing: border-box; }
.task-view { margin-right: 3px; }
.task svg { width: 24px; height: 24px; }
.task .view { width: 18px; height: 16px; }
.task.open { background: linear-gradient(#76b9ed, #76b9ed) center bottom / 38px 2px no-repeat; }
.task.active { background: #34495a; border-bottom: 2px solid #76b9ed; padding-top: 2px; }
.tray { display: flex; align-items: center; margin-left: auto; margin-right: 4px; padding-right: 16px; border-right: 1px solid #5b6570; }
.tray button { width: 24px; height: 40px; justify-content: center; }
.tray svg { width: 16px; height: 16px; fill: none; stroke: #fff; }
.clock { display: flex; flex-direction: column; align-items: center; width: 64px; line-height: 18px; font-size: 11px; }
.tray .notes { margin-left: 8px; }
</style>
